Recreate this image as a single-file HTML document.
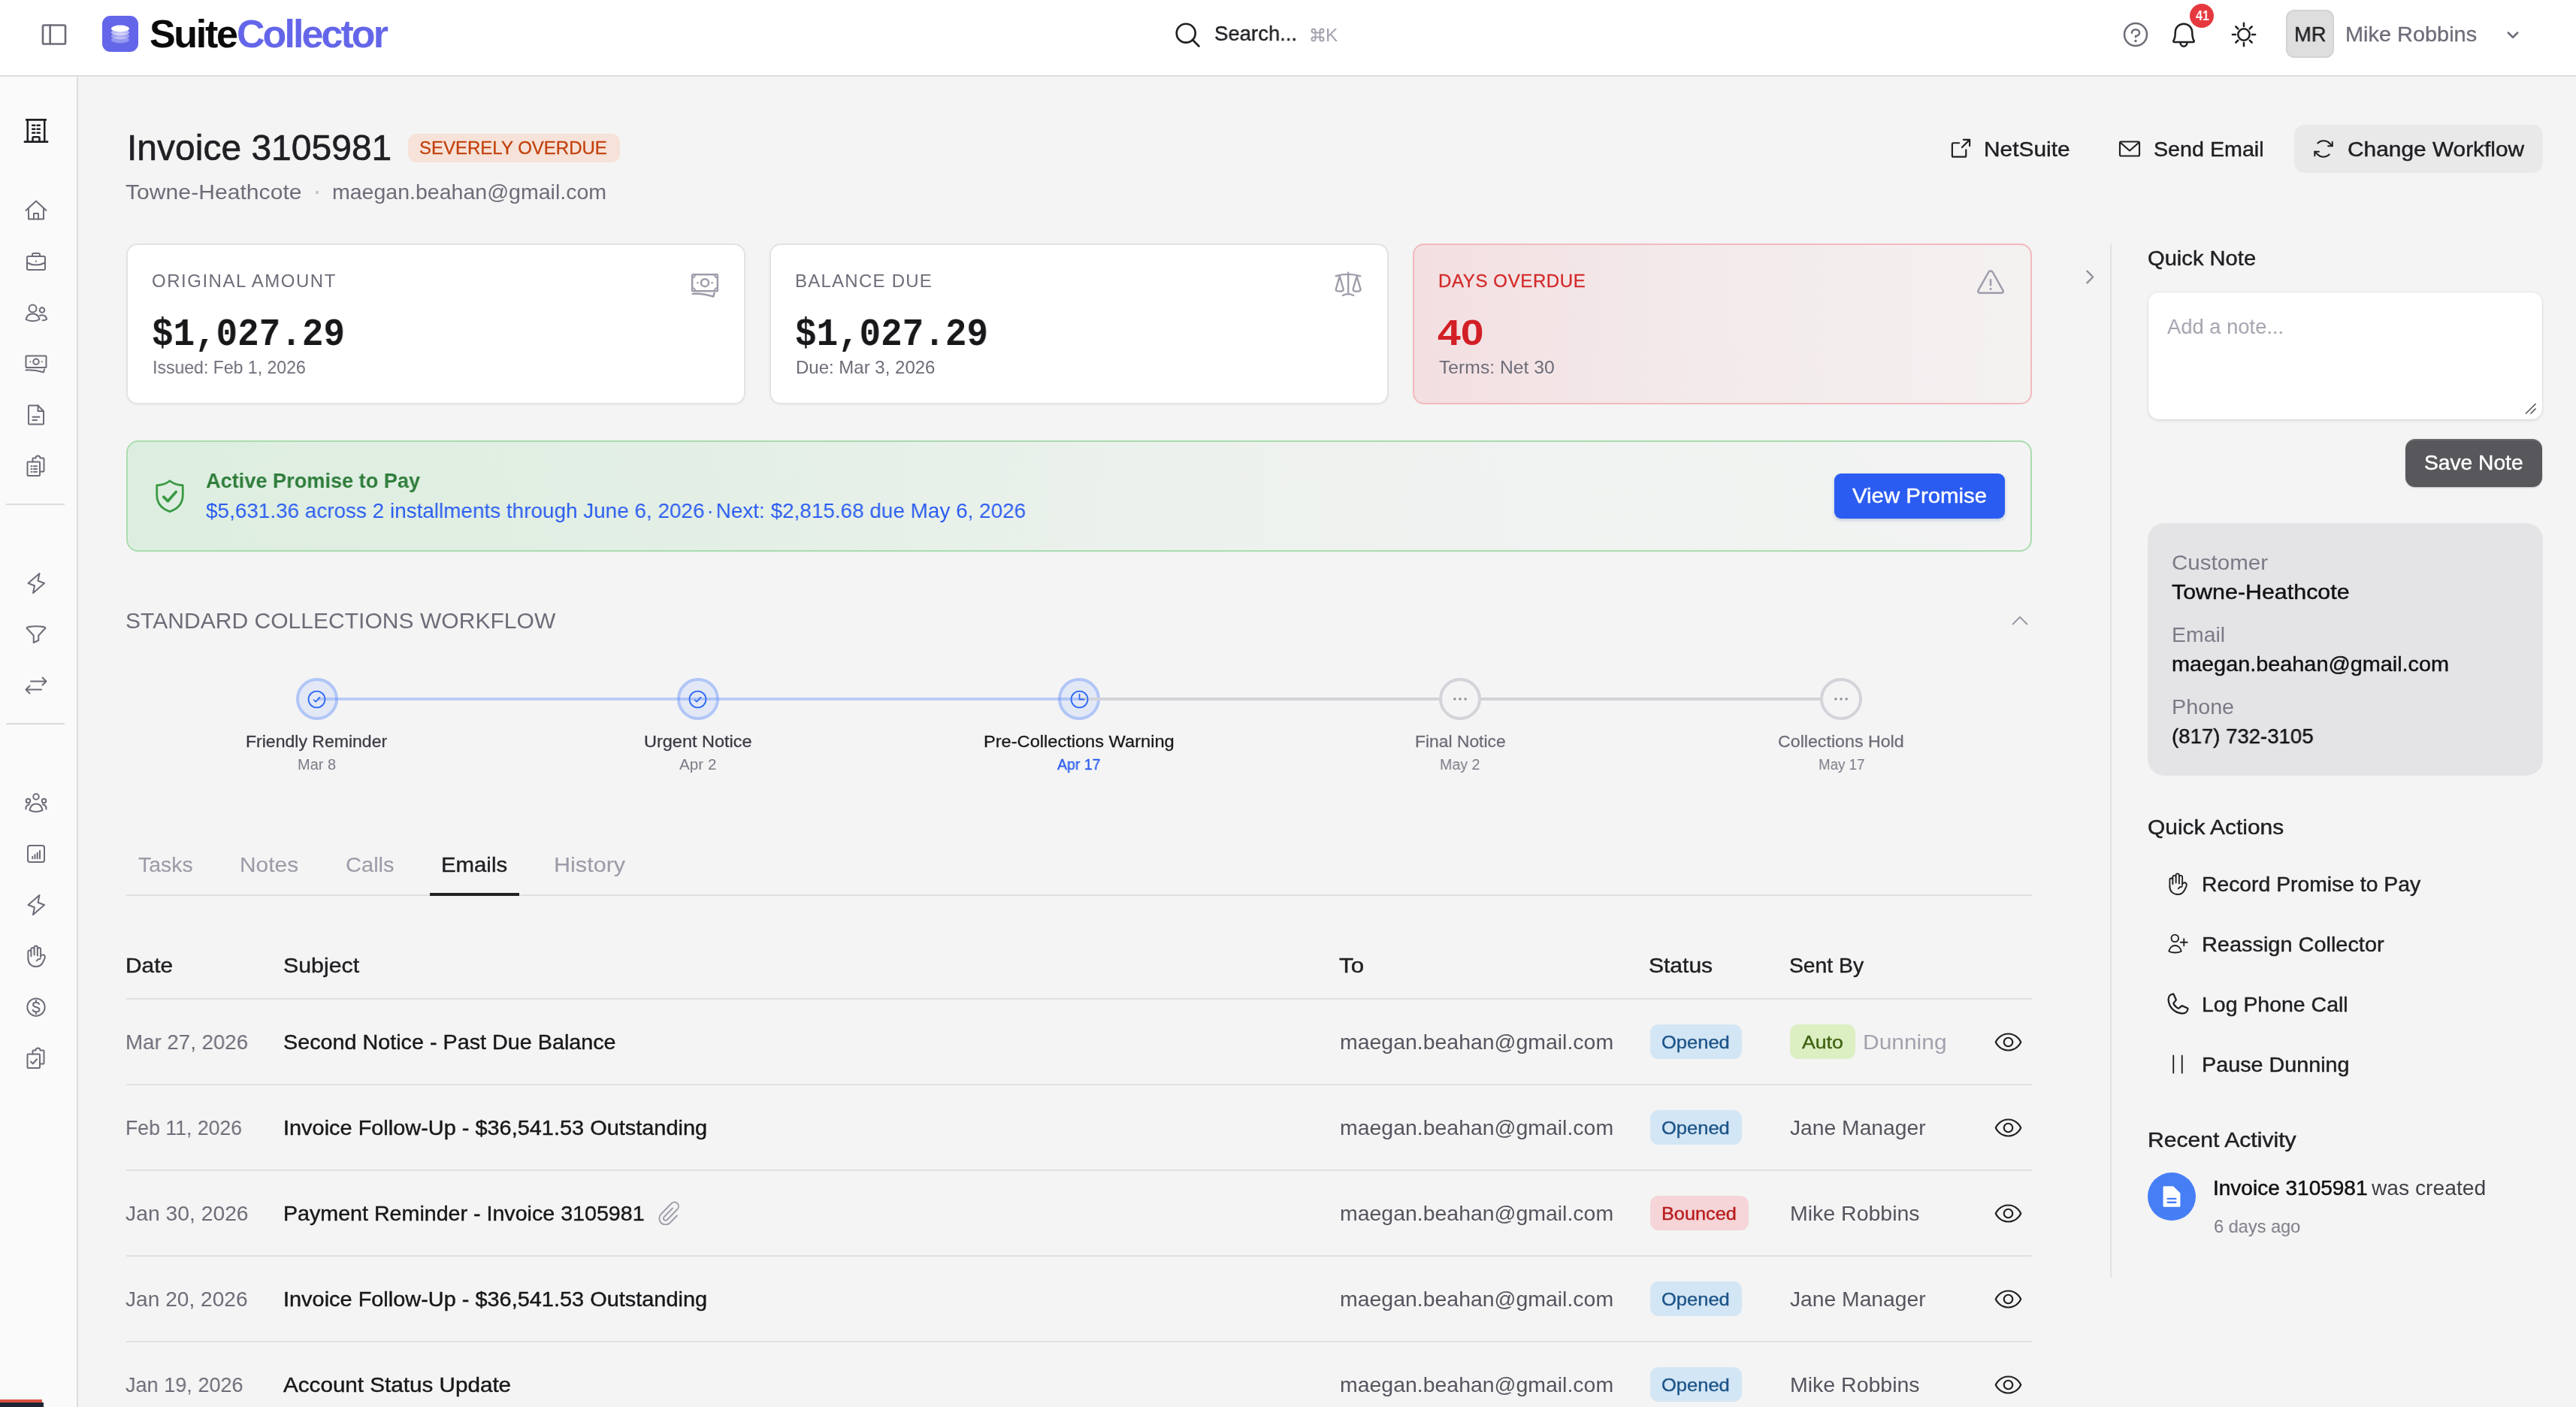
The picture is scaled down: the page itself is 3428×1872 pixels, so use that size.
<!DOCTYPE html>
<html lang="en"><head><meta charset="utf-8"><title>Invoice 3105981 - SuiteCollector</title><meta name="viewport" content="width=3428"><style>html,body{margin:0;padding:0;background:#f4f4f4;}body{width:3428px;height:1872px;position:relative;overflow:hidden;font-family:"Liberation Sans",sans-serif;}.a{position:absolute;display:block;}.t{position:absolute;white-space:nowrap;line-height:1;display:block;transform-origin:0 50%;will-change:transform;}.m{font-family:"Liberation Mono",monospace;}@media (min-resolution:1.5dppx) and (max-width:2000px){html{zoom:.5;}}</style></head>
<body>
<div class="a" style="left:0px;top:0px;width:3428px;height:1872px;background:#f4f4f4;"></div>
<div class="a" style="left:0px;top:0px;width:3428px;height:100px;background:#ffffff;"></div>
<div class="a" style="left:0px;top:100px;width:3428px;height:2px;background:#dddde1;"></div>
<div class="a" style="left:0px;top:102px;width:102px;height:1770px;background:#fafafa;"></div>
<div class="a" style="left:102px;top:102px;width:2px;height:1770px;background:#dddde1;"></div>
<svg class="a" style="left:52.00px;top:26.00px;color:#6d6d79;" width="40" height="40" viewBox="0 0 256 256" fill="none" stroke="currentColor" stroke-width="17" stroke-linecap="round" stroke-linejoin="round"><rect x="32" y="48" width="192" height="160" rx="10"/><path d="M94 48v160"/></svg>
<div class="a" style="left:136px;top:21px;width:48px;height:48px;background:#6466e9;border-radius:11px;"></div>
<svg class="a" style="left:136px;top:21px" width="48" height="48" viewBox="0 0 48 48"><ellipse cx="24" cy="32" rx="12" ry="4.4" fill="#fff" opacity=".32"/><ellipse cx="24" cy="27" rx="12" ry="4.4" fill="#fff" opacity=".38"/><ellipse cx="24" cy="22" rx="12" ry="4.4" fill="#fff" opacity=".55"/><ellipse cx="24" cy="17" rx="12" ry="4.4" fill="#fff"/></svg>
<span class="t" id="suite" style="left:199.42px;top:19.48px;font-size:52px;color:#0a0a0a;font-weight:700;letter-spacing:-2.310px;">Suite</span>
<span class="t" id="collector" style="left:314.92px;top:19.48px;font-size:52px;color:#6466e9;font-weight:700;letter-spacing:-2.934px;">Collector</span>
<svg class="a" style="left:1560.50px;top:26.50px;color:#202024;" width="38" height="38" viewBox="0 0 256 256" fill="none" stroke="currentColor" stroke-width="18" stroke-linecap="round" stroke-linejoin="round"><circle cx="116" cy="116" r="84"/><path d="M175.4 175.4L232 232"/></svg>
<span class="t" id="search" style="left:1615.90px;top:31.30px;font-size:28px;color:#202024;transform:scaleX(0.9825);-webkit-text-stroke:0.4px #202024;">Search...</span>
<svg class="a" style="left:1743.5px;top:37px;color:#a3a3af" width="19" height="19" viewBox="0 0 19 19" fill="none" stroke="currentColor" stroke-width="2"><path d="M6.5 6.5h6v6h-6zM6.5 6.5H4a2.5 2.5 0 112.5-2.5zM12.5 6.5V4A2.5 2.5 0 1115 6.5zM12.5 12.5H15a2.5 2.5 0 11-2.5 2.5zM6.5 12.5V15A2.5 2.5 0 114 12.5z"/></svg>
<span class="t" id="kbd" style="left:1764.02px;top:34.68px;font-size:24px;color:#a3a3af;transform:scaleX(1.0178);">K</span>
<svg class="a" style="left:2822.00px;top:26.00px;color:#6d6d79;" width="40" height="40" viewBox="0 0 256 256" fill="none" stroke="currentColor" stroke-width="16" stroke-linecap="round" stroke-linejoin="round"><circle cx="128" cy="128" r="96"/><path d="M128 148v-8c18 0 32-12 32-28s-14-28-32-28-32 12-32 28v2"/><circle cx="128" cy="182" r="11" fill="currentColor" stroke="none"/></svg>
<svg class="a" style="left:2886.00px;top:26.00px;color:#202024;" width="40" height="40" viewBox="0 0 256 256" fill="none" stroke="currentColor" stroke-width="16" stroke-linecap="round" stroke-linejoin="round"><path d="M100 200a28 28 0 0056 0"/><path d="M56 108a72 72 0 01144 0c0 36 8 60 15 72a8 8 0 01-7 12H48a8 8 0 01-7-12c7-12 15-36 15-72z"/></svg>
<div class="a" style="left:2914px;top:5px;width:32px;height:32px;background:#e5393f;border-radius:16px;"></div>
<span class="t" id="badge41" style="left:2921.61px;top:11.56px;font-size:18px;color:#fff;font-weight:700;transform:scaleX(0.8911);">41</span>
<svg class="a" style="left:2966.50px;top:27.00px;color:#202024;" width="38" height="38" viewBox="0 0 256 256" fill="none" stroke="currentColor" stroke-width="17" stroke-linecap="round" stroke-linejoin="round"><circle cx="128" cy="128" r="52"/><path d="M128 54V26M128 230v-28M75.7 75.7L55.9 55.9M200.1 200.1l-19.8-19.8M54 128H26M230 128h-28M75.7 180.3l-19.8 19.8M200.1 55.9l-19.8 19.8"/></svg>
<div class="a" style="left:3042px;top:13px;width:64px;height:64px;background:#dedede;border-radius:11px;border:2px solid #d3d3d6;box-sizing:border-box;"></div>
<span class="t" id="mr" style="left:3052.65px;top:31.90px;font-size:28px;color:#202024;transform:scaleX(0.9783);-webkit-text-stroke:0.4px #202024;">MR</span>
<span class="t" id="mike" style="left:3120.84px;top:32.00px;font-size:28px;color:#6d6d79;transform:scaleX(1.0322);-webkit-text-stroke:0.3px #6d6d79;">Mike Robbins</span>
<svg class="a" style="left:3333.50px;top:36.00px;color:#6d6d79;" width="20" height="20" viewBox="0 0 256 256" fill="none" stroke="currentColor" stroke-width="32" stroke-linecap="round" stroke-linejoin="round"><path d="M208 96l-80 80-80-80"/></svg>
<svg class="a" style="left:30.00px;top:155.50px;color:#202024;" width="36" height="36" viewBox="0 0 256 256" fill="none" stroke="currentColor" stroke-width="18" stroke-linecap="round" stroke-linejoin="round"><path d="M36 24h184M48 24v208M208 24v208M20 232h216"/><path d="M94 76h22M140 76h22M94 112h22M140 112h22M94 148h22M140 148h22"/><path d="M96 232v-36a10 10 0 0110-10h44a10 10 0 0110 10v36"/></svg>
<svg class="a" style="left:32.00px;top:264.00px;color:#6d6d79;" width="32" height="32" viewBox="0 0 256 256" fill="none" stroke="currentColor" stroke-width="16" stroke-linecap="round" stroke-linejoin="round"><path d="M20 128L128 28l108 100"/><path d="M48 104v116h160V104"/><path d="M104 220v-60h48v60"/></svg>
<svg class="a" style="left:32.00px;top:332.00px;color:#6d6d79;" width="32" height="32" viewBox="0 0 256 256" fill="none" stroke="currentColor" stroke-width="16" stroke-linecap="round" stroke-linejoin="round"><rect x="32" y="72" width="192" height="144" rx="14"/><path d="M88 72V56a16 16 0 0116-16h48a16 16 0 0116 16v16"/><path d="M32 140c30 16 62 24 96 24s66-8 96-24"/><circle cx="128" cy="124" r="9" fill="currentColor" stroke="none"/></svg>
<svg class="a" style="left:32.00px;top:400.00px;color:#6d6d79;" width="32" height="32" viewBox="0 0 256 256" fill="none" stroke="currentColor" stroke-width="16" stroke-linecap="round" stroke-linejoin="round"><circle cx="92" cy="84" r="40"/><path d="M20 200c8-40 36-60 72-60s64 20 72 60c-20 12-44 18-72 18s-52-6-72-18z"/><circle cx="192" cy="100" r="26"/><path d="M168 160c8-4 16-6 24-6 26 0 44 16 50 44-12 8-28 12-44 12"/></svg>
<svg class="a" style="left:32.00px;top:468.00px;color:#6d6d79;" width="32" height="32" viewBox="0 0 256 256" fill="none" stroke="currentColor" stroke-width="16" stroke-linecap="round" stroke-linejoin="round"><rect x="20" y="44" width="216" height="124" rx="6"/><circle cx="128" cy="106" r="30"/><circle cx="66" cy="106" r="8" fill="currentColor" stroke="none"/><circle cx="190" cy="106" r="8" fill="currentColor" stroke="none"/><path d="M20 196c60-4 124 4 188 22l8-30"/></svg>
<svg class="a" style="left:32.00px;top:536.00px;color:#6d6d79;" width="32" height="32" viewBox="0 0 256 256" fill="none" stroke="currentColor" stroke-width="16" stroke-linecap="round" stroke-linejoin="round"><path d="M200 228H56a8 8 0 01-8-8V36a8 8 0 018-8h92l60 60v132a8 8 0 01-8 8z"/><path d="M148 28v60h60"/><path d="M92 150h72M92 184h44"/></svg>
<svg class="a" style="left:32.00px;top:604.00px;color:#6d6d79;" width="32" height="32" viewBox="0 0 256 256" fill="none" stroke="currentColor" stroke-width="16" stroke-linecap="round" stroke-linejoin="round"><rect x="36" y="84" width="132" height="148" rx="8"/><path d="M76 130h8M76 160h8M76 190h8M104 130h32M104 160h32M104 190h32"/><path d="M92 84V52a8 8 0 018-8h24a24 24 0 0148 0h32a8 8 0 018 8v128a8 8 0 01-8 8h-36"/></svg>
<svg class="a" style="left:32.00px;top:760.00px;color:#6d6d79;" width="32" height="32" viewBox="0 0 256 256" fill="none" stroke="currentColor" stroke-width="16" stroke-linecap="round" stroke-linejoin="round"><path d="M96 232l16-78-68-26L164 24l-16 78 68 26z"/></svg>
<svg class="a" style="left:32.00px;top:828.00px;color:#6d6d79;" width="32" height="32" viewBox="0 0 256 256" fill="none" stroke="currentColor" stroke-width="16" stroke-linecap="round" stroke-linejoin="round"><path d="M28 60c0-10 44-18 100-18s100 8 100 18c0 4-4 8-10 12l-64 68v52l-52 24v-76L38 72c-6-4-10-8-10-12z"/></svg>
<svg class="a" style="left:32.00px;top:896.00px;color:#6d6d79;" width="32" height="32" viewBox="0 0 256 256" fill="none" stroke="currentColor" stroke-width="16" stroke-linecap="round" stroke-linejoin="round"><path d="M72 84h164M196 44l40 40-40 40"/><path d="M184 172H20M60 132l-40 40 40 40"/></svg>
<svg class="a" style="left:32.00px;top:1052.00px;color:#6d6d79;" width="32" height="32" viewBox="0 0 256 256" fill="none" stroke="currentColor" stroke-width="16" stroke-linecap="round" stroke-linejoin="round"><circle cx="128" cy="64" r="30"/><path d="M60 208c8-44 36-68 68-68s60 24 68 68c-20 10-44 16-68 16s-48-6-68-16z"/><circle cx="44" cy="108" r="22"/><circle cx="212" cy="108" r="22"/><path d="M20 196c-2-24 10-44 36-50M236 196c2-24-10-44-36-50"/></svg>
<svg class="a" style="left:32.00px;top:1120.00px;color:#6d6d79;" width="32" height="32" viewBox="0 0 256 256" fill="none" stroke="currentColor" stroke-width="16" stroke-linecap="round" stroke-linejoin="round"><rect x="40" y="40" width="176" height="176" rx="22"/><path d="M90 178v-20M116 178v-40M142 178v-60M168 178V96"/></svg>
<svg class="a" style="left:32.00px;top:1188.00px;color:#6d6d79;" width="32" height="32" viewBox="0 0 256 256" fill="none" stroke="currentColor" stroke-width="16" stroke-linecap="round" stroke-linejoin="round"><path d="M96 232l16-78-68-26L164 24l-16 78 68 26z"/></svg>
<svg class="a" style="left:32.00px;top:1256.00px;color:#6d6d79;" width="32" height="32" viewBox="0 0 256 256" fill="none" stroke="currentColor" stroke-width="16" stroke-linecap="round" stroke-linejoin="round"><path d="M43 156V84a16 16 0 0132 0v46M75 84V56a17 17 0 0134 0v60M109 56V36a17 17 0 0134 0v88M143 56a17 17 0 0134 0v84"/><path d="M177 128c10-14 26-18 38-8s8 28 0 44l-14 30c-16 32-40 46-74 46-48 0-84-32-84-84"/><path d="M134 178c8-12 22-20 40-22"/></svg>
<svg class="a" style="left:32.00px;top:1324.00px;color:#6d6d79;" width="32" height="32" viewBox="0 0 256 256" fill="none" stroke="currentColor" stroke-width="16" stroke-linecap="round" stroke-linejoin="round"><circle cx="128" cy="128" r="93"/><path d="M160 96c-4-12-16-18-32-18-18 0-32 10-32 24 0 34 68 18 68 52 0 14-14 24-36 24-18 0-30-8-34-20M128 56v22M128 178v22"/></svg>
<svg class="a" style="left:32.00px;top:1392.00px;color:#6d6d79;" width="32" height="32" viewBox="0 0 256 256" fill="none" stroke="currentColor" stroke-width="16" stroke-linecap="round" stroke-linejoin="round"><rect x="36" y="84" width="132" height="148" rx="8"/><path d="M72 164l22 22 42-48"/><path d="M92 84V52a8 8 0 018-8h24a24 24 0 0148 0h32a8 8 0 018 8v128a8 8 0 01-8 8h-36"/></svg>
<div class="a" style="left:8px;top:670px;width:78px;height:2px;background:#dcdce0;"></div>
<div class="a" style="left:8px;top:962px;width:78px;height:2px;background:#dcdce0;"></div>
<div class="a" style="left:0px;top:1862px;width:56px;height:5px;background:#d9503f;"></div>
<div class="a" style="left:0px;top:1866px;width:58px;height:6px;background:#1f2633;"></div>
<span class="t" id="title" style="left:168.59px;top:173.16px;font-size:48px;color:#202024;-webkit-text-stroke:0.6px #202024;">Invoice 3105981</span>
<div class="a" style="left:543px;top:178px;width:282px;height:38px;background:#f6e2d8;border-radius:11px;"></div>
<span class="t" id="sev" style="left:558.04px;top:185.18px;font-size:24px;color:#c2410c;letter-spacing:-0.005px;-webkit-text-stroke:0.3px #c2410c;">SEVERELY OVERDUE</span>
<span class="t" id="sub1" style="left:167.29px;top:241.90px;font-size:28px;color:#6d6d79;transform:scaleX(1.0766);">Towne-Heathcote</span>
<div class="a" style="left:420px;top:254px;width:4px;height:4px;background:#c9c9d1;"></div>
<span class="t" id="sub2" style="left:441.86px;top:241.90px;font-size:28px;color:#6d6d79;transform:scaleX(1.0186);">maegan.beahan@gmail.com</span>
<svg class="a" style="left:2594.00px;top:182.00px;color:#202024;" width="31" height="31" viewBox="0 0 256 256" fill="none" stroke="currentColor" stroke-width="18" stroke-linecap="round" stroke-linejoin="round"><path d="M224 100V32h-68M140 116l84-84M184 144v64a12 12 0 01-12 12H44a12 12 0 01-12-12V80a12 12 0 0112-12h64"/></svg>
<span class="t" id="netsuite" style="left:2640.30px;top:184.60px;font-size:28px;color:#202024;transform:scaleX(1.0670);-webkit-text-stroke:0.42px #202024;">NetSuite</span>
<svg class="a" style="left:2818.00px;top:181.50px;color:#202024;" width="32" height="32" viewBox="0 0 256 256" fill="none" stroke="currentColor" stroke-width="17" stroke-linecap="round" stroke-linejoin="round"><rect x="24" y="52" width="208" height="152" rx="12"/><path d="M28 60l100 88 100-88"/></svg>
<span class="t" id="sendemail" style="left:2865.85px;top:184.60px;font-size:28px;color:#202024;transform:scaleX(1.0238);-webkit-text-stroke:0.42px #202024;">Send Email</span>
<div class="a" style="left:3053px;top:166px;width:331px;height:64px;background:#e9e9ea;border-radius:14px;"></div>
<svg class="a" style="left:3077.00px;top:183.00px;color:#202024;" width="30" height="30" viewBox="0 0 256 256" fill="none" stroke="currentColor" stroke-width="17" stroke-linecap="round" stroke-linejoin="round"><path d="M180 96h48V48"/><path d="M228 96l-30-30a96 96 0 00-136-2"/><path d="M76 160H28v48"/><path d="M28 160l30 30a96 96 0 00136 2"/></svg>
<span class="t" id="changewf" style="left:3123.81px;top:184.60px;font-size:28px;color:#202024;transform:scaleX(1.0663);-webkit-text-stroke:0.42px #202024;">Change Workflow</span>
<div class="a" style="left:168px;top:324px;width:824px;height:214px;background:#ffffff;border-radius:15px;border:2px solid #e3e3e7;box-sizing:border-box;box-shadow:0 1px 3px rgba(0,0,0,.04);"></div>
<div class="a" style="left:1024px;top:324px;width:824px;height:214px;background:#ffffff;border-radius:15px;border:2px solid #e3e3e7;box-sizing:border-box;box-shadow:0 1px 3px rgba(0,0,0,.04);"></div>
<div class="a" style="left:1880px;top:324px;width:824px;height:214px;background:linear-gradient(90deg,#f3dfe1 0%,#f3eaeb 45%,#f4f1f1 100%);border-radius:15px;border:2px solid #f2babd;box-sizing:border-box;"></div>
<span class="t" id="c1l" style="left:201.74px;top:361.68px;font-size:24px;color:#6d6d79;letter-spacing:1.511px;">ORIGINAL AMOUNT</span>
<span class="t m" id="c1v" style="left:202.26px;top:420.16px;font-size:52px;color:#18181b;font-weight:700;transform:scaleX(0.9147);">$1,027.29</span>
<span class="t" id="c1s" style="left:202.88px;top:477.48px;font-size:24px;color:#6d6d79;transform:scaleX(0.9606);">Issued: Feb 1, 2026</span>
<svg class="a" style="left:918.00px;top:359.00px;color:#9d9daa;" width="40" height="40" viewBox="0 0 256 256" fill="none" stroke="currentColor" stroke-width="16" stroke-linecap="round" stroke-linejoin="round"><rect x="20" y="40" width="216" height="140" rx="8"/><circle cx="128" cy="110" r="32"/><circle cx="66" cy="110" r="8" fill="currentColor" stroke="none"/><circle cx="190" cy="110" r="8" fill="currentColor" stroke="none"/><path d="M22 66a24 24 0 0024-24M234 66a24 24 0 01-24-24M22 154a24 24 0 0124 24M234 154a24 24 0 00-24 24" stroke-width="12"/><path d="M24 204c60-4 116 4 176 24l8-30"/></svg>
<span class="t" id="c2l" style="left:1057.74px;top:361.68px;font-size:24px;color:#6d6d79;letter-spacing:1.241px;">BALANCE DUE</span>
<span class="t m" id="c2v" style="left:1058.26px;top:420.16px;font-size:52px;color:#18181b;font-weight:700;transform:scaleX(0.9147);">$1,027.29</span>
<span class="t" id="c2s" style="left:1058.84px;top:477.48px;font-size:24px;color:#6d6d79;">Due: Mar 3, 2026</span>
<svg class="a" style="left:1773.75px;top:358.00px;color:#9d9daa;" width="40" height="40" viewBox="0 0 256 256" fill="none" stroke="currentColor" stroke-width="15" stroke-linecap="round" stroke-linejoin="round"><path d="M129 30v183M24 60Q128 28 232 60M82 224Q128 200 174 224"/><path d="M56 62L24 172c0 12 14 18 32 18s32-6 32-18z"/><path d="M202 62l-32 110c0 12 14 18 32 18s32-6 32-18z"/></svg>
<span class="t" id="c3l" style="left:1913.74px;top:361.68px;font-size:24px;color:#d42a2a;letter-spacing:0.624px;-webkit-text-stroke:0.3px #d42a2a;">DAYS OVERDUE</span>
<span class="t" id="c3v" style="left:1912.78px;top:418.86px;font-size:48px;color:#d11f25;font-weight:700;transform:scaleX(1.1538);">40</span>
<span class="t" id="c3s" style="left:1914.81px;top:477.48px;font-size:24px;color:#6d6d79;transform:scaleX(1.0295);">Terms: Net 30</span>
<svg class="a" style="left:2629.00px;top:356.00px;color:#9d9daa;" width="40" height="40" viewBox="0 0 256 256" fill="none" stroke="currentColor" stroke-width="16" stroke-linecap="round" stroke-linejoin="round"><path d="M110 40L22 196a14 14 0 0012 20h188a14 14 0 0012-20L146 40a20 20 0 00-36 0z"/><path d="M128 104v44"/><circle cx="128" cy="182" r="10" fill="currentColor" stroke="none"/></svg>
<svg class="a" style="left:2768.20px;top:355.50px;color:#8f8f9b;" width="25" height="25" viewBox="0 0 256 256" fill="none" stroke="currentColor" stroke-width="24" stroke-linecap="round" stroke-linejoin="round"><path d="M96 48l80 80-80 80"/></svg>
<div class="a" style="left:168px;top:586px;width:2536px;height:148px;background:linear-gradient(90deg,#ddeee0 0%,#e3efe5 30%,#eef2ef 60%,#f2f3f2 100%);border-radius:16px;border:2px solid #a9dcae;box-sizing:border-box;"></div>
<svg class="a" style="left:201.80px;top:636.00px;color:#3a9a44;" width="48" height="48" viewBox="0 0 256 256" fill="none" stroke="currentColor" stroke-width="15" stroke-linecap="round" stroke-linejoin="round"><path d="M128 20c-24 20-54 30-92 32v68c0 62 40 100 92 118 52-18 92-56 92-118V52c-38-2-68-12-92-32z"/><path d="M84 134l30 30 58-66" stroke-width="20"/></svg>
<span class="t" id="apt" style="left:273.91px;top:626.10px;font-size:28px;color:#2f7d3b;font-weight:700;transform:scaleX(0.9693);">Active Promise to Pay</span>
<span class="t" id="aps" style="left:273.88px;top:665.70px;font-size:28px;color:#2b5df0;transform:scaleX(0.9959);">$5,631.36 across 2 installments through June 6, 2026<span style="margin:0 3px">&middot;</span>Next: $2,815.68 due May 6, 2026</span>
<div class="a" style="left:2441px;top:630px;width:227px;height:60px;background:#2b5cf1;border-radius:9px;box-shadow:0 2px 4px rgba(30,60,160,.25);"></div>
<span class="t" id="viewp" style="left:2464.82px;top:645.80px;font-size:28px;color:#ffffff;transform:scaleX(1.0495);-webkit-text-stroke:0.4px #ffffff;">View Promise</span>
<span class="t" id="wf" style="left:167.30px;top:811.40px;font-size:30px;color:#6d6d79;letter-spacing:0.039px;">STANDARD COLLECTIONS WORKFLOW</span>
<svg class="a" style="left:2672.00px;top:811.00px;color:#9898a4;stroke-linecap:butt;" width="32" height="32" viewBox="0 0 256 256" fill="none" stroke="currentColor" stroke-width="15" stroke-linecap="round" stroke-linejoin="round"><path d="M48 160l80-80 80 80"/></svg>
<div class="a" style="left:393.6px;top:902px;width:56px;height:56px;background:#e3e8f6;border-radius:28px;border:4px solid #b1c6f7;box-sizing:border-box;"></div>
<div class="a" style="left:900.8px;top:902px;width:56px;height:56px;background:#e3e8f6;border-radius:28px;border:4px solid #b1c6f7;box-sizing:border-box;"></div>
<div class="a" style="left:1408px;top:902px;width:56px;height:56px;background:#e3e8f6;border-radius:28px;border:4px solid #b1c6f7;box-sizing:border-box;"></div>
<div class="a" style="left:421.6px;top:928px;width:1014.4px;height:4px;background:rgba(96,140,248,.38);"></div>
<div class="a" style="left:1436px;top:928px;width:1014.4000000000001px;height:4px;background:#d3d3d9;"></div>
<div class="a" style="left:1915.2px;top:902px;width:56px;height:56px;background:#f4f4f4;border-radius:28px;border:4px solid #d3d3d9;box-sizing:border-box;"></div>
<div class="a" style="left:2422.4px;top:902px;width:56px;height:56px;background:#f4f4f4;border-radius:28px;border:4px solid #d3d3d9;box-sizing:border-box;"></div>
<svg class="a" style="left:408.10px;top:916.50px;color:#2f6bf3;" width="27" height="27" viewBox="0 0 256 256" fill="none" stroke="currentColor" stroke-width="17" stroke-linecap="round" stroke-linejoin="round"><circle cx="128" cy="128" r="104"/><path d="M92 136l24 22 50-54"/></svg>
<svg class="a" style="left:915.30px;top:916.50px;color:#2f6bf3;" width="27" height="27" viewBox="0 0 256 256" fill="none" stroke="currentColor" stroke-width="17" stroke-linecap="round" stroke-linejoin="round"><circle cx="128" cy="128" r="104"/><path d="M92 136l24 22 50-54"/></svg>
<svg class="a" style="left:1422.50px;top:916.50px;color:#2f6bf3;" width="27" height="27" viewBox="0 0 256 256" fill="none" stroke="currentColor" stroke-width="17" stroke-linecap="round" stroke-linejoin="round"><circle cx="128" cy="128" r="104"/><path d="M128 64v64h60"/></svg>
<svg class="a" style="left:1930.20px;top:917.00px;color:#8d8d9a;" width="26" height="26" viewBox="0 0 256 256" fill="none" stroke="currentColor" stroke-width="0" stroke-linecap="round" stroke-linejoin="round"><circle cx="58" cy="128" r="17" fill="currentColor" stroke="none"/><circle cx="128" cy="128" r="17" fill="currentColor" stroke="none"/><circle cx="198" cy="128" r="17" fill="currentColor" stroke="none"/></svg>
<svg class="a" style="left:2437.40px;top:917.00px;color:#8d8d9a;" width="26" height="26" viewBox="0 0 256 256" fill="none" stroke="currentColor" stroke-width="0" stroke-linecap="round" stroke-linejoin="round"><circle cx="58" cy="128" r="17" fill="currentColor" stroke="none"/><circle cx="128" cy="128" r="17" fill="currentColor" stroke="none"/><circle cx="198" cy="128" r="17" fill="currentColor" stroke="none"/></svg>
<span class="t" id="wl0" style="left:327.43px;top:976.37px;font-size:22px;color:#3a3a44;transform:scaleX(1.0468);-webkit-text-stroke:0.28px #3a3a44;">Friendly Reminder</span>
<span class="t" id="wd0" style="left:396.05px;top:1006.87px;font-size:20px;color:#7b7b87;">Mar 8</span>
<span class="t" id="wl1" style="left:856.86px;top:976.37px;font-size:22px;color:#3a3a44;transform:scaleX(1.0679);-webkit-text-stroke:0.28px #3a3a44;">Urgent Notice</span>
<span class="t" id="wd1" style="left:903.97px;top:1006.87px;font-size:20px;color:#7b7b87;transform:scaleX(1.0353);">Apr 2</span>
<span class="t" id="wl2" style="left:1309.06px;top:976.37px;font-size:22px;color:#18181b;transform:scaleX(1.0730);-webkit-text-stroke:0.28px #18181b;">Pre-Collections Warning</span>
<span class="t" id="wd2" style="left:1407.22px;top:1006.87px;font-size:20px;color:#2b5df0;transform:scaleX(0.9756);-webkit-text-stroke:0.35px #2b5df0;">Apr 17</span>
<span class="t" id="wl3" style="left:1882.79px;top:976.37px;font-size:22px;color:#6d6d79;transform:scaleX(1.0387);-webkit-text-stroke:0.28px #6d6d79;">Final Notice</span>
<span class="t" id="wd3" style="left:1916.41px;top:1006.87px;font-size:20px;color:#7b7b87;transform:scaleX(0.9822);">May 2</span>
<span class="t" id="wl4" style="left:2366.47px;top:976.37px;font-size:22px;color:#6d6d79;transform:scaleX(1.0546);-webkit-text-stroke:0.28px #6d6d79;">Collections Hold</span>
<span class="t" id="wd4" style="left:2419.65px;top:1006.87px;font-size:20px;color:#7b7b87;transform:scaleX(0.9376);">May 17</span>
<div class="a" style="left:168px;top:1190px;width:2536px;height:2px;background:#e0e0e4;"></div>
<div class="a" style="left:572px;top:1188px;width:119px;height:4px;background:#222225;"></div>
<span class="t" id="tab0" style="left:183.86px;top:1137.30px;font-size:28px;color:#9c9ca8;transform:scaleX(1.0143);-webkit-text-stroke:0.1px #9c9ca8;">Tasks</span>
<span class="t" id="tab1" style="left:319.30px;top:1137.30px;font-size:28px;color:#9c9ca8;transform:scaleX(1.0676);-webkit-text-stroke:0.1px #9c9ca8;">Notes</span>
<span class="t" id="tab2" style="left:459.84px;top:1137.30px;font-size:28px;color:#9c9ca8;transform:scaleX(1.0380);-webkit-text-stroke:0.1px #9c9ca8;">Calls</span>
<span class="t" id="tab3" style="left:586.83px;top:1137.30px;font-size:28px;color:#202024;transform:scaleX(1.0486);-webkit-text-stroke:0.42px #202024;">Emails</span>
<span class="t" id="tab4" style="left:736.78px;top:1137.30px;font-size:28px;color:#9c9ca8;transform:scaleX(1.0915);-webkit-text-stroke:0.1px #9c9ca8;">History</span>
<span class="t" id="th0" style="left:167.31px;top:1270.80px;font-size:28px;color:#202024;transform:scaleX(1.0667);-webkit-text-stroke:0.42px #202024;">Date</span>
<span class="t" id="th1" style="left:377.29px;top:1270.80px;font-size:28px;color:#202024;transform:scaleX(1.0824);-webkit-text-stroke:0.42px #202024;">Subject</span>
<span class="t" id="th2" style="left:1781.75px;top:1270.80px;font-size:28px;color:#202024;transform:scaleX(1.1191);-webkit-text-stroke:0.42px #202024;">To</span>
<span class="t" id="th3" style="left:2193.80px;top:1270.80px;font-size:28px;color:#202024;transform:scaleX(1.0719);-webkit-text-stroke:0.42px #202024;">Status</span>
<span class="t" id="th4" style="left:2381.37px;top:1270.80px;font-size:28px;color:#202024;transform:scaleX(1.0106);-webkit-text-stroke:0.42px #202024;">Sent By</span>
<div class="a" style="left:168px;top:1328px;width:2536px;height:2px;background:#e0e0e4;"></div>
<div class="a" style="left:168px;top:1442px;width:2536px;height:2px;background:#e0e0e4;"></div>
<div class="a" style="left:168px;top:1556px;width:2536px;height:2px;background:#e0e0e4;"></div>
<div class="a" style="left:168px;top:1670px;width:2536px;height:2px;background:#e0e0e4;"></div>
<div class="a" style="left:168px;top:1784px;width:2536px;height:2px;background:#e0e0e4;"></div>
<span class="t" id="rd0" style="left:167.39px;top:1373.00px;font-size:28px;color:#6d6d79;transform:scaleX(0.9885);">Mar 27, 2026</span>
<span class="t" id="rs0" style="left:377.35px;top:1373.00px;font-size:28px;color:#18181b;transform:scaleX(1.0266);-webkit-text-stroke:0.42px #18181b;">Second Notice - Past Due Balance</span>
<span class="t" id="re0" style="left:1782.86px;top:1373.00px;font-size:28px;color:#55555f;transform:scaleX(1.0158);">maegan.beahan@gmail.com</span>
<div class="a" style="left:2196px;top:1363px;width:122px;height:46px;background:#d3e6f5;border-radius:11px;"></div>
<span class="t" id="rb0" style="left:2211.48px;top:1374.68px;font-size:24px;color:#1d5488;transform:scaleX(1.0632);-webkit-text-stroke:0.4px #1d5488;">Opened</span>
<div class="a" style="left:2382px;top:1363px;width:87px;height:46px;background:#dcefc2;border-radius:11px;"></div>
<span class="t" id="ra0" style="left:2398.43px;top:1374.68px;font-size:24px;color:#3f6212;transform:scaleX(1.1099);-webkit-text-stroke:0.4px #3f6212;">Auto</span>
<span class="t" id="rn0" style="left:2479.30px;top:1373.00px;font-size:28px;color:#a3a3af;transform:scaleX(1.0699);">Dunning</span>
<svg class="a" style="left:2653.50px;top:1368.00px;color:#202024;" width="37" height="37" viewBox="0 0 256 256" fill="none" stroke="currentColor" stroke-width="15" stroke-linecap="round" stroke-linejoin="round"><path d="M128 52C44 52 12 128 12 128s32 76 116 76 116-76 116-76-32-76-116-76z"/><circle cx="128" cy="128" r="40"/></svg>
<span class="t" id="rd1" style="left:167.43px;top:1487.00px;font-size:28px;color:#6d6d79;transform:scaleX(0.9518);">Feb 11, 2026</span>
<span class="t" id="rs1" style="left:377.34px;top:1487.00px;font-size:28px;color:#18181b;transform:scaleX(1.0325);-webkit-text-stroke:0.42px #18181b;">Invoice Follow-Up - $36,541.53 Outstanding</span>
<span class="t" id="re1" style="left:1782.86px;top:1487.00px;font-size:28px;color:#55555f;transform:scaleX(1.0158);">maegan.beahan@gmail.com</span>
<div class="a" style="left:2196px;top:1477px;width:122px;height:46px;background:#d3e6f5;border-radius:11px;"></div>
<span class="t" id="rb1" style="left:2211.48px;top:1488.68px;font-size:24px;color:#1d5488;transform:scaleX(1.0632);-webkit-text-stroke:0.4px #1d5488;">Opened</span>
<span class="t" id="rn1" style="left:2382.37px;top:1487.00px;font-size:28px;color:#55555f;transform:scaleX(1.0089);">Jane Manager</span>
<svg class="a" style="left:2653.50px;top:1482.00px;color:#202024;" width="37" height="37" viewBox="0 0 256 256" fill="none" stroke="currentColor" stroke-width="15" stroke-linecap="round" stroke-linejoin="round"><path d="M128 52C44 52 12 128 12 128s32 76 116 76 116-76 116-76-32-76-116-76z"/><circle cx="128" cy="128" r="40"/></svg>
<span class="t" id="rd2" style="left:167.37px;top:1601.00px;font-size:28px;color:#6d6d79;transform:scaleX(1.0104);">Jan 30, 2026</span>
<span class="t" id="rs2" style="left:377.35px;top:1601.00px;font-size:28px;color:#18181b;transform:scaleX(1.0225);-webkit-text-stroke:0.42px #18181b;">Payment Reminder - Invoice 3105981</span>
<svg class="a" style="left:873.50px;top:1598.00px;color:#9d9daa;" width="32" height="32" viewBox="0 0 256 256" fill="none" stroke="currentColor" stroke-width="15" stroke-linecap="round" stroke-linejoin="round"><path d="M168 76L78 168a22 22 0 0032 32l112-116a44 44 0 00-62-62L46 138a66 66 0 0094 94l76-78"/></svg>
<span class="t" id="re2" style="left:1782.86px;top:1601.00px;font-size:28px;color:#55555f;transform:scaleX(1.0158);">maegan.beahan@gmail.com</span>
<div class="a" style="left:2196px;top:1591px;width:131px;height:46px;background:#f5d5d8;border-radius:11px;"></div>
<span class="t" id="rb2" style="left:2211.49px;top:1602.68px;font-size:24px;color:#b91c1c;transform:scaleX(1.0533);-webkit-text-stroke:0.4px #b91c1c;">Bounced</span>
<span class="t" id="rn2" style="left:2382.36px;top:1601.00px;font-size:28px;color:#55555f;transform:scaleX(1.0174);">Mike Robbins</span>
<svg class="a" style="left:2653.50px;top:1596.00px;color:#202024;" width="37" height="37" viewBox="0 0 256 256" fill="none" stroke="currentColor" stroke-width="15" stroke-linecap="round" stroke-linejoin="round"><path d="M128 52C44 52 12 128 12 128s32 76 116 76 116-76 116-76-32-76-116-76z"/><circle cx="128" cy="128" r="40"/></svg>
<span class="t" id="rd3" style="left:167.38px;top:1715.00px;font-size:28px;color:#6d6d79;transform:scaleX(1.0042);">Jan 20, 2026</span>
<span class="t" id="rs3" style="left:377.34px;top:1715.00px;font-size:28px;color:#18181b;transform:scaleX(1.0325);-webkit-text-stroke:0.42px #18181b;">Invoice Follow-Up - $36,541.53 Outstanding</span>
<span class="t" id="re3" style="left:1782.86px;top:1715.00px;font-size:28px;color:#55555f;transform:scaleX(1.0158);">maegan.beahan@gmail.com</span>
<div class="a" style="left:2196px;top:1705px;width:122px;height:46px;background:#d3e6f5;border-radius:11px;"></div>
<span class="t" id="rb3" style="left:2211.48px;top:1716.68px;font-size:24px;color:#1d5488;transform:scaleX(1.0632);-webkit-text-stroke:0.4px #1d5488;">Opened</span>
<span class="t" id="rn3" style="left:2382.37px;top:1715.00px;font-size:28px;color:#55555f;transform:scaleX(1.0089);">Jane Manager</span>
<svg class="a" style="left:2653.50px;top:1710.00px;color:#202024;" width="37" height="37" viewBox="0 0 256 256" fill="none" stroke="currentColor" stroke-width="15" stroke-linecap="round" stroke-linejoin="round"><path d="M128 52C44 52 12 128 12 128s32 76 116 76 116-76 116-76-32-76-116-76z"/><circle cx="128" cy="128" r="40"/></svg>
<span class="t" id="rd4" style="left:167.42px;top:1829.00px;font-size:28px;color:#6d6d79;transform:scaleX(0.9671);">Jan 19, 2026</span>
<span class="t" id="rs4" style="left:377.31px;top:1829.00px;font-size:28px;color:#18181b;transform:scaleX(1.0583);-webkit-text-stroke:0.42px #18181b;">Account Status Update</span>
<span class="t" id="re4" style="left:1782.86px;top:1829.00px;font-size:28px;color:#55555f;transform:scaleX(1.0158);">maegan.beahan@gmail.com</span>
<div class="a" style="left:2196px;top:1819px;width:122px;height:46px;background:#d3e6f5;border-radius:11px;"></div>
<span class="t" id="rb4" style="left:2211.48px;top:1830.68px;font-size:24px;color:#1d5488;transform:scaleX(1.0632);-webkit-text-stroke:0.4px #1d5488;">Opened</span>
<span class="t" id="rn4" style="left:2382.36px;top:1829.00px;font-size:28px;color:#55555f;transform:scaleX(1.0174);">Mike Robbins</span>
<svg class="a" style="left:2653.50px;top:1824.00px;color:#202024;" width="37" height="37" viewBox="0 0 256 256" fill="none" stroke="currentColor" stroke-width="15" stroke-linecap="round" stroke-linejoin="round"><path d="M128 52C44 52 12 128 12 128s32 76 116 76 116-76 116-76-32-76-116-76z"/><circle cx="128" cy="128" r="40"/></svg>
<div class="a" style="left:2808px;top:324px;width:2px;height:1376px;background:#e2e2e6;"></div>
<span class="t" id="qn" style="left:2857.83px;top:330.30px;font-size:28px;color:#202024;transform:scaleX(1.0404);-webkit-text-stroke:0.42px #202024;">Quick Note</span>
<div class="a" style="left:2859px;top:389px;width:524px;height:169px;background:#ffffff;border-radius:14px;box-shadow:0 0 0 1px rgba(20,20,40,.05),0 2px 4px rgba(0,0,0,.09);"></div>
<span class="t" id="ph" style="left:2883.91px;top:420.50px;font-size:28px;color:#a3a3af;transform:scaleX(0.9767);">Add a note...</span>
<svg class="a" style="left:3357px;top:533px" width="20" height="20" viewBox="0 0 20 20" stroke="#55555a" stroke-width="1.6" fill="none"><path d="M4 17.5L17.5 4M10.5 17.5l7-7"/></svg>
<div class="a" style="left:3201px;top:584px;width:182px;height:64px;background:#58585c;border-radius:13px;box-shadow:inset 0 2px 0 rgba(255,255,255,.12),0 1px 2px rgba(0,0,0,.2);"></div>
<span class="t" id="save" style="left:3225.87px;top:602.30px;font-size:28px;color:#ffffff;transform:scaleX(1.0065);-webkit-text-stroke:0.42px #ffffff;">Save Note</span>
<div class="a" style="left:2858px;top:696px;width:526px;height:336px;background:#e4e4e7;border-radius:22px;"></div>
<span class="t" id="cl0" style="left:2889.82px;top:735.30px;font-size:28px;color:#7b7b87;transform:scaleX(1.0554);">Customer</span>
<span class="t" id="cv0" style="left:2889.78px;top:774.30px;font-size:28px;color:#111114;transform:scaleX(1.0858);-webkit-text-stroke:0.42px #111114;">Towne-Heathcote</span>
<span class="t" id="cl1" style="left:2889.86px;top:831.30px;font-size:28px;color:#7b7b87;transform:scaleX(1.0155);">Email</span>
<span class="t" id="cv1" style="left:2889.85px;top:870.30px;font-size:28px;color:#111114;transform:scaleX(1.0298);-webkit-text-stroke:0.42px #111114;">maegan.beahan@gmail.com</span>
<span class="t" id="cl2" style="left:2889.85px;top:927.30px;font-size:28px;color:#7b7b87;transform:scaleX(1.0263);">Phone</span>
<span class="t" id="cv2" style="left:2889.90px;top:966.30px;font-size:28px;color:#111114;transform:scaleX(0.9849);-webkit-text-stroke:0.42px #111114;">(817) 732-3105</span>
<span class="t" id="qa" style="left:2857.80px;top:1086.50px;font-size:28px;color:#202024;transform:scaleX(1.0676);-webkit-text-stroke:0.42px #202024;">Quick Actions</span>
<svg class="a" style="left:2882.00px;top:1160.00px;color:#202024;" width="32" height="32" viewBox="0 0 256 256" fill="none" stroke="currentColor" stroke-width="15" stroke-linecap="round" stroke-linejoin="round"><path d="M43 156V84a16 16 0 0132 0v46M75 84V56a17 17 0 0134 0v60M109 56V36a17 17 0 0134 0v88M143 56a17 17 0 0134 0v84"/><path d="M177 128c10-14 26-18 38-8s8 28 0 44l-14 30c-16 32-40 46-74 46-48 0-84-32-84-84"/><path d="M134 178c8-12 22-20 40-22"/></svg>
<span class="t" id="qa0" style="left:2929.87px;top:1163.00px;font-size:28px;color:#202024;transform:scaleX(1.0111);-webkit-text-stroke:0.42px #202024;">Record Promise to Pay</span>
<svg class="a" style="left:2882.00px;top:1240.00px;color:#202024;" width="32" height="32" viewBox="0 0 256 256" fill="none" stroke="currentColor" stroke-width="15" stroke-linecap="round" stroke-linejoin="round"><path d="M158 110h72M194 74v72"/><circle cx="98" cy="67" r="38"/><path d="M34 206c8-36 34-62 66-62s58 26 66 62c-20 10-42 14-66 14s-46-4-66-14z"/></svg>
<span class="t" id="qa1" style="left:2929.84px;top:1243.00px;font-size:28px;color:#202024;transform:scaleX(1.0323);-webkit-text-stroke:0.42px #202024;">Reassign Collector</span>
<svg class="a" style="left:2880.00px;top:1318.00px;color:#202024;" width="36" height="36" viewBox="0 0 256 256" fill="none" stroke="currentColor" stroke-width="15" stroke-linecap="round" stroke-linejoin="round"><path fill="currentColor" stroke="none" d="M222.37,158.46l-47.11-21.11-.13-.06a16,16,0,0,0-15.17,1.4,8.12,8.12,0,0,0-.75.56L134.87,160c-15.42-7.49-31.34-23.29-38.83-38.51l20.78-24.71c.2-.25.39-.5.57-.77a16,16,0,0,0,1.32-15.06l0-.12L97.54,33.64a16,16,0,0,0-16.62-9.52A56.26,56.26,0,0,0,32,80c0,79.4,64.6,144,144,144a56.26,56.26,0,0,0,55.88-48.92A16,16,0,0,0,222.37,158.46ZM176,208A128.14,128.14,0,0,1,48,80,40.2,40.2,0,0,1,82.87,40a.61.61,0,0,0,0,.12l21,47L83.2,111.86a6.13,6.13,0,0,0-.57.77,16,16,0,0,0-1,15.7c9.06,18.53,27.73,37.06,46.46,46.11a16,16,0,0,0,15.75-1.14,8.44,8.44,0,0,0,.74-.56L168.89,152l47,21.05h0s.08,0,.11,0A40.21,40.21,0,0,1,176,208Z"/></svg>
<span class="t" id="qa2" style="left:2929.86px;top:1323.00px;font-size:28px;color:#202024;transform:scaleX(1.0163);-webkit-text-stroke:0.42px #202024;">Log Phone Call</span>
<svg class="a" style="left:2882.00px;top:1400.00px;color:#202024;" width="32" height="32" viewBox="0 0 256 256" fill="none" stroke="currentColor" stroke-width="15" stroke-linecap="round" stroke-linejoin="round"><path d="M82 36v184M174 36v184"/></svg>
<span class="t" id="qa3" style="left:2929.85px;top:1403.00px;font-size:28px;color:#202024;transform:scaleX(1.0267);-webkit-text-stroke:0.42px #202024;">Pause Dunning</span>
<span class="t" id="ra" style="left:2857.79px;top:1503.10px;font-size:28px;color:#202024;transform:scaleX(1.0760);-webkit-text-stroke:0.42px #202024;">Recent Activity</span>
<div class="a" style="left:2858px;top:1560px;width:64px;height:64px;background:#467ef6;border-radius:32px;"></div>
<svg class="a" style="left:2873.00px;top:1575.00px;color:#ffffff;" width="34" height="34" viewBox="0 0 256 256" fill="none" stroke="currentColor" stroke-width="0" stroke-linecap="round" stroke-linejoin="round"><path d="M204 232H52a10 10 0 01-10-10V34a10 10 0 0110-10h92l70 70v128a10 10 0 01-10 10z" fill="#fff" stroke="none"/><path d="M88 150h80M88 186h80" stroke="#467ef6" stroke-width="18" stroke-linecap="round"/></svg>
<span class="t" id="act1" style="left:2945.38px;top:1567.10px;font-size:28px;color:#111114;-webkit-text-stroke:0.5px #111114;">Invoice 3105981</span>
<span class="t" id="act2" style="left:3156.37px;top:1567.10px;font-size:28px;color:#3f3f46;transform:scaleX(1.0075);">was created</span>
<span class="t" id="act3" style="left:2946.06px;top:1620.18px;font-size:24px;color:#7b7b87;transform:scaleX(0.9819);">6 days ago</span>
</body></html>
